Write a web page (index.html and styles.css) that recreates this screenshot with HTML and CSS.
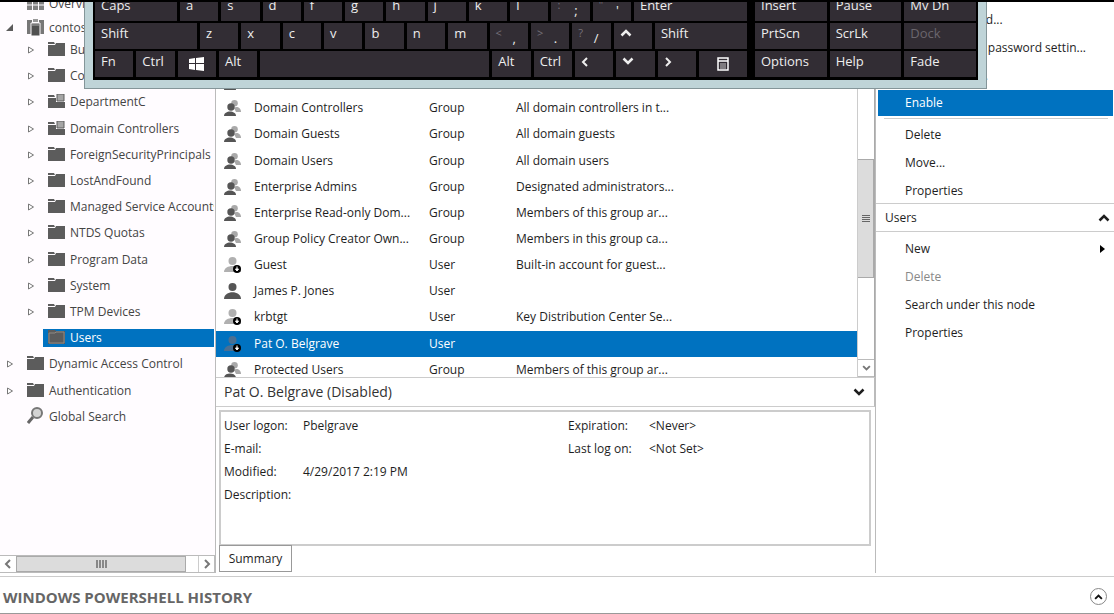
FILE: index.html
```html
<!DOCTYPE html>
<html lang="en">
<head>
    <meta charset="utf-8">
    <title>Active Directory Administrative Center</title>
    <link rel="stylesheet" href="styles.css">
</head>
<body>
    <svg class="defs" aria-hidden="true">
        <symbol id="folder" viewBox="0 0 17 14">
            <path d="M0 0H6L7 2H0Z" fill="currentColor"/>
            <path d="M0 3H7L8 1H17V14H0Z" fill="currentColor"/>
        </symbol>
        <symbol id="folderUnit" viewBox="0 0 17 14">
            <path d="M0 1H6L7 3H0Z" fill="currentColor"/>
            <path d="M0 4H8V8H17V14H0Z" fill="currentColor"/>
            <path d="M9 0H16V7H9Z" fill="#a5a5a5" stroke="#5c5c5c"/>
        </symbol>
        <symbol id="group" viewBox="0 0 17 16">
            <circle cx="10.500" cy="3.300" r="3.300" fill="#a9a9a9"/>
            <path d="M10 8C12 6 17 7 17 12H12Z" fill="#a9a9a9"/>
            <circle cx="7" cy="7" r="3.700" fill="#555"/>
            <path d="M0 16C0 10 12 10 12 16Z" fill="#555"/>
        </symbol>
        <symbol id="user" viewBox="0 0 17 16">
            <circle cx="8.500" cy="4" r="4" fill="currentColor"/>
            <path d="M0 16C0 7 17 7 17 16Z" fill="currentColor"/>
        </symbol>
        <symbol id="userOff" viewBox="0 0 17 16">
            <circle cx="8.500" cy="4" r="4" fill="currentColor"/>
            <path d="M0 15C0 7 17 7 17 15Z" fill="currentColor"/>
            <circle cx="13" cy="12" r="4" fill="#000"/>
            <path d="M13 9.500V12M11.500 12L13 14L14.500 12Z" fill="#fff" stroke="#fff"/>
        </symbol>
        <symbol id="closed" viewBox="0 0 7 8">
            <path d="M1 1L6 4L1 7Z" fill="#fff" stroke="#777"/>
        </symbol>
        <symbol id="down" viewBox="0 0 12 8">
            <path d="M1.500 1.500L6 6L10.500 1.500" fill="none" stroke="currentColor" stroke-width="2.500"/>
        </symbol>
        <symbol id="up" viewBox="0 0 12 8">
            <path d="M1.500 6.500L6 2L10.500 6.500" fill="none" stroke="currentColor" stroke-width="2.500"/>
        </symbol>
        <symbol id="left" viewBox="0 0 8 10">
            <path d="M6 1L2 5L6 9" fill="none" stroke="currentColor" stroke-width="2"/>
        </symbol>
        <symbol id="right" viewBox="0 0 8 10">
            <path d="M2 1L6 5L2 9" fill="none" stroke="currentColor" stroke-width="2"/>
        </symbol>
    </svg>

    <main class="console">
        <nav class="treePane">
            <ul class="tree treeTop">
                <li class="node"><span class="arrow"></span><svg class="icon" viewBox="0 0 17 14"><path d="M0 0H5V14H0ZM6 0H11V14H6ZM12 0H17V14H12Z" fill="#808080"/><path d="M0 9H17" stroke="#fffcff"/></svg><span>Overview</span></li>
                <li class="node"><span class="arrow"><svg width="7" height="7" viewBox="0 0 7 7"><path d="M7 0V7H0Z" fill="#5c5c5c"/></svg></span><svg class="icon domain" viewBox="0 0 17 17"><path d="M0 1H5V15H0ZM12 1H17V15H12Z" fill="#777"/><path d="M6 0H11V3H6Z" fill="#999"/><path d="M4 4H13V17H4Z" fill="#505050" stroke="#fffcff"/><path d="M5 6H12" stroke="#aaa"/></svg><span>contoso (local)</span></li>
            </ul>
            <ul class="tree treeList">
                <li class="node child"><svg class="arrow"><use href="#closed"/></svg><svg class="icon"><use href="#folder"/></svg><span>Builtin</span></li>
                <li class="node child"><svg class="arrow"><use href="#closed"/></svg><svg class="icon"><use href="#folder"/></svg><span>Computers</span></li>
                <li class="node child"><svg class="arrow"><use href="#closed"/></svg><svg class="icon"><use href="#folderUnit"/></svg><span>DepartmentC</span></li>
                <li class="node child"><svg class="arrow"><use href="#closed"/></svg><svg class="icon"><use href="#folderUnit"/></svg><span>Domain Controllers</span></li>
                <li class="node child"><svg class="arrow"><use href="#closed"/></svg><svg class="icon"><use href="#folder"/></svg><span>ForeignSecurityPrincipals</span></li>
                <li class="node child"><svg class="arrow"><use href="#closed"/></svg><svg class="icon"><use href="#folder"/></svg><span>LostAndFound</span></li>
                <li class="node child"><svg class="arrow"><use href="#closed"/></svg><svg class="icon"><use href="#folder"/></svg><span>Managed Service Accounts</span></li>
                <li class="node child"><svg class="arrow"><use href="#closed"/></svg><svg class="icon"><use href="#folder"/></svg><span>NTDS Quotas</span></li>
                <li class="node child"><svg class="arrow"><use href="#closed"/></svg><svg class="icon"><use href="#folder"/></svg><span>Program Data</span></li>
                <li class="node child"><svg class="arrow"><use href="#closed"/></svg><svg class="icon"><use href="#folder"/></svg><span>System</span></li>
                <li class="node child"><svg class="arrow"><use href="#closed"/></svg><svg class="icon"><use href="#folder"/></svg><span>TPM Devices</span></li>
                <li class="node child"><span class="arrow"></span><span class="current"><svg class="icon" viewBox="0 0 17 14"><path d="M0 0H7L8 1H17V14H0Z" fill="#5c5c5c"/><path d="M1 3H7L8 2H16V13H1Z" fill="none" stroke="#8f8a85"/></svg>Users</span></li>
                <li class="node"><svg class="arrow"><use href="#closed"/></svg><svg class="icon"><use href="#folder"/></svg><span>Dynamic Access Control</span></li>
                <li class="node"><svg class="arrow"><use href="#closed"/></svg><svg class="icon"><use href="#folder"/></svg><span>Authentication</span></li>
                <li class="node"><span class="arrow"></span><svg class="icon domain" viewBox="0 0 17 17"><path d="M1 16L6 10" stroke="#666" stroke-width="3"/><circle cx="10" cy="6" r="5" fill="#d4d4d4" stroke="#777" stroke-width="2"/></svg><span>Global Search</span></li>
            </ul>
            <div class="hScroll">
                <button class="scrollButton" aria-label="Scroll left"><svg width="8" height="10"><use href="#left"/></svg></button>
                <div class="hThumb"><i></i><i></i><i></i><i></i></div>
                <button class="scrollButton" aria-label="Scroll right"><svg width="8" height="10"><use href="#right"/></svg></button>
            </div>
        </nav>

        <section class="listPane">
            <div class="listArea">
                <div class="rows">
                    <table class="objects">
                        <tr><td class="kind"><svg><use href="#group"/></svg></td><td class="name">Domain Computers</td><td class="type">Group</td><td>All workstations an...</td></tr>
                        <tr><td class="kind"><svg><use href="#group"/></svg></td><td class="name">Domain Controllers</td><td class="type">Group</td><td>All domain controllers in t...</td></tr>
                        <tr><td class="kind"><svg><use href="#group"/></svg></td><td class="name">Domain Guests</td><td class="type">Group</td><td>All domain guests</td></tr>
                        <tr><td class="kind"><svg><use href="#group"/></svg></td><td class="name">Domain Users</td><td class="type">Group</td><td>All domain users</td></tr>
                        <tr><td class="kind"><svg><use href="#group"/></svg></td><td class="name">Enterprise Admins</td><td class="type">Group</td><td>Designated administrators...</td></tr>
                        <tr><td class="kind"><svg><use href="#group"/></svg></td><td class="name">Enterprise Read-only Dom...</td><td class="type">Group</td><td>Members of this group ar...</td></tr>
                        <tr><td class="kind"><svg><use href="#group"/></svg></td><td class="name">Group Policy Creator Own...</td><td class="type">Group</td><td>Members in this group ca...</td></tr>
                        <tr><td class="kind off"><svg><use href="#userOff"/></svg></td><td class="name">Guest</td><td class="type">User</td><td>Built-in account for guest...</td></tr>
                        <tr><td class="kind"><svg><use href="#user"/></svg></td><td class="name">James P. Jones</td><td class="type">User</td><td></td></tr>
                        <tr><td class="kind off"><svg><use href="#userOff"/></svg></td><td class="name">krbtgt</td><td class="type">User</td><td>Key Distribution Center Se...</td></tr>
                        <tr class="selected"><td class="kind"><svg><use href="#userOff"/></svg></td><td class="name">Pat O. Belgrave</td><td class="type">User</td><td></td></tr>
                        <tr><td class="kind"><svg><use href="#group"/></svg></td><td class="name">Protected Users</td><td class="type">Group</td><td>Members of this group ar...</td></tr>
                    </table>
                </div>
                <div class="vScroll">
                    <div class="vThumb"><i></i><i></i><i></i><i></i></div>
                    <button class="scrollButton" aria-label="Scroll down"><svg width="9" height="6"><use href="#down"/></svg></button>
                </div>
            </div>
            <header class="detailHead">
                <h2>Pat O. Belgrave (Disabled)</h2>
                <button class="plain" aria-label="Collapse details"><svg width="12" height="8"><use href="#down"/></svg></button>
            </header>
            <div class="details">
                <dl class="summary">
                    <dt>User logon:</dt><dd>Pbelgrave</dd><dt>Expiration:</dt><dd>&lt;Never&gt;</dd>
                    <dt>E-mail:</dt><dd></dd><dt>Last log on:</dt><dd>&lt;Not Set&gt;</dd>
                    <dt>Modified:</dt><dd>4/29/2017 2:19 PM</dd><dt></dt><dd></dd>
                    <dt>Description:</dt><dd></dd><dt></dt><dd></dd>
                </dl>
                <button class="tab">Summary</button>
            </div>
        </section>

        <aside class="tasks">
            <div class="taskList">
                <button class="task">Reset password...</button>
                <button class="task">View resultant password settin...</button>
                <button class="task">Add to group...</button>
                <button class="task active">Enable</button>
                <hr>
                <button class="task">Delete</button>
                <button class="task">Move...</button>
                <button class="task">Properties</button>
            </div>
            <header class="taskHead">
                <h2>Users</h2>
                <button class="plain" aria-label="Collapse"><svg width="12" height="8"><use href="#up"/></svg></button>
            </header>
            <div class="taskList nodeTasks">
                <button class="task">New<svg width="5" height="8" viewBox="0 0 5 8"><path d="M0 0L5 4L0 8Z"/></svg></button>
                <button class="task" disabled>Delete</button>
                <button class="task">Search under this node</button>
                <button class="task">Properties</button>
            </div>
        </aside>

        <div class="keyboard">
            <div class="board">
                <div class="keys">
                    <div class="keyRow">
                        <button class="key caps">Caps</button>
                        <button class="key">a</button>
                        <button class="key">s</button>
                        <button class="key">d</button>
                        <button class="key">f</button>
                        <button class="key">g</button>
                        <button class="key">h</button>
                        <button class="key">j</button>
                        <button class="key">k</button>
                        <button class="key">l</button>
                        <button class="key double"><span>:</span><b>;</b></button>
                        <button class="key double"><span>"</span><b>'</b></button>
                        <button class="key enter">Enter</button>
                    </div>
                    <div class="keyRow">
                        <button class="key shiftLeft">Shift</button>
                        <button class="key">z</button>
                        <button class="key">x</button>
                        <button class="key">c</button>
                        <button class="key">v</button>
                        <button class="key">b</button>
                        <button class="key">n</button>
                        <button class="key">m</button>
                        <button class="key double"><span>&lt;</span><b>,</b></button>
                        <button class="key double"><span>&gt;</span><b>.</b></button>
                        <button class="key double"><span>?</span><b>/</b></button>
                        <button class="key" aria-label="Up"><svg width="12" height="8"><use href="#up"/></svg></button>
                        <button class="key shiftRight">Shift</button>
                    </div>
                    <div class="keyRow">
                        <button class="key">Fn</button>
                        <button class="key">Ctrl</button>
                        <button class="key glyph" aria-label="Windows"><svg width="15" height="14" viewBox="0 0 15 14"><path d="M0 2L6 1V6H0ZM7 1L15 0V6H7ZM0 7H6V13L0 12ZM7 7H15V14L7 13Z" fill="#fff"/></svg></button>
                        <button class="key">Alt</button>
                        <button class="key space" aria-label="Space"></button>
                        <button class="key">Alt</button>
                        <button class="key">Ctrl</button>
                        <button class="key" aria-label="Left"><svg width="8" height="10"><use href="#left"/></svg></button>
                        <button class="key" aria-label="Down"><svg width="12" height="8"><use href="#down"/></svg></button>
                        <button class="key" aria-label="Right"><svg width="8" height="10"><use href="#right"/></svg></button>
                        <button class="key glyph menu" aria-label="Menu"><svg width="12" height="14" viewBox="0 0 12 14"><path d="M1 1H11V13H1ZM1 4H11" fill="none" stroke="#fff" stroke-width="1.500"/><path d="M3 7H9M3 9H9M3 11H9" stroke="#ccc"/></svg></button>
                    </div>
                </div>
                <div class="sideKeys">
                    <button class="key">Insert</button>
                    <button class="key">Pause</button>
                    <button class="key">Mv Dn</button>
                    <button class="key">PrtScn</button>
                    <button class="key">ScrLk</button>
                    <button class="key" disabled>Dock</button>
                    <button class="key">Options</button>
                    <button class="key">Help</button>
                    <button class="key">Fade</button>
                </div>
            </div>
        </div>
    </main>

    <footer class="history">
        <h1>WINDOWS POWERSHELL HISTORY</h1>
        <button class="round" aria-label="Expand history"><svg width="9" height="6"><use href="#up"/></svg></button>
    </footer>
</body>
</html>
```
FILE: styles.css
```css
* {
    box-sizing: border-box;
}

body {
    display: flex;
    flex-direction: column;
    height: 100vh;
    margin: 0;
    border-top: 2px solid #000;
    border-bottom: 1px solid #999;
    background-color: #fff;
    color: #1e1e1e;
    font-family: "Open Sans", "Noto Sans", sans-serif;
    font-size: 12px;
    line-height: 18px;
    white-space: nowrap;
    overflow: hidden;
}

button {
    padding: 0;
    border: none;
    background: none;
    color: inherit;
    font: inherit;
}

svg {
    display: block;
    flex: none;
}

h1, h2, ul, dl, dd {
    margin: 0;
    padding: 0;
}

.defs {
    position: absolute;
    width: 0;
    height: 0;
}

.console {
    position: relative;
    display: grid;
    grid-template-columns: 216px 1fr 239px;
    flex: 1;
    min-height: 0;
    padding-bottom: 3px;
    border-bottom: 1px solid #ccc;
    overflow: hidden;
}

/* navigation tree */
.treePane {
    display: flex;
    flex-direction: column;
    min-height: 0;
    border-right: 1px solid #bbb;
    background-color: #fffcff;
    color: #444;
    overflow: hidden;
}

.tree {
    display: grid;
    list-style: none;
}

.treeTop {
    grid-auto-rows: 24px;
    margin-top: -10px;
}

.treeList {
    grid-auto-rows: 1fr;
    height: 393px;
    margin-top: -3px;
}

.node {
    display: flex;
    align-items: center;
    padding-left: 6px;
    margin-right: 1px;
    overflow: hidden;
}

.child {
    padding-left: 27px;
}

.arrow {
    width: 8px;
    height: 8px;
    margin-right: 13px;
}

.icon {
    width: 17px;
    height: 14px;
    margin-right: 5px;
    margin-bottom: 2px;
    color: #5c5c5c;
}

.domain {
    height: 17px;
}

.current {
    display: flex;
    align-items: center;
    flex: 1;
    margin-left: -5px;
    padding-left: 5px;
    background-color: #0072c0;
    color: #fff;
}

.hScroll {
    display: flex;
    height: 18px;
    margin-top: auto;
    border: 1px solid #bbb;
    border-left: none;
    background-color: #fff;
}

.scrollButton {
    display: flex;
    align-items: center;
    justify-content: center;
    width: 16px;
    height: 16px;
    color: #777;
}

.hThumb, .vThumb {
    display: flex;
    align-items: center;
    justify-content: center;
    gap: 1px;
    border: 1px solid #aaa;
    background-color: #dcdcdc;
}

.hThumb {
    width: 170px;
    margin-right: auto;
}

.hThumb i {
    width: 2px;
    height: 8px;
    background-color: #888;
}

.hThumb + .scrollButton {
    border-left: 1px solid #ccc;
}

/* object list */
.listPane {
    display: flex;
    flex-direction: column;
    min-width: 0;
    min-height: 0;
}

.listArea {
    display: flex;
    flex: 1;
    min-height: 0;
    border-right: 1px solid #aaa;
}

.rows {
    flex: 1;
    min-width: 0;
    overflow: hidden;
}

.objects {
    width: 100%;
    height: 314px;
    margin-top: 67px;
    border-collapse: collapse;
    table-layout: fixed;
}

.objects td {
    padding: 0;
}

.kind {
    width: 38px;
    color: #555;
}

.kind svg {
    width: 17px;
    height: 16px;
    margin-left: 8px;
}

.off {
    color: #b0b0b0;
}

.name {
    width: 175px;
}

.type {
    width: 87px;
}

.selected {
    background-color: #0072c0;
    color: #fff;
}

.selected .kind {
    color: #4a6f92;
}

.vScroll {
    display: flex;
    flex-direction: column;
    width: 17px;
    border-left: 1px solid #ccc;
}

.vThumb {
    flex-direction: column;
    height: 119px;
    margin-top: 157px;
    border-left: none;
}

.vThumb i {
    width: 8px;
    height: 1px;
    background-color: #666;
}

.vScroll .scrollButton {
    height: 18px;
    margin-top: auto;
    border-top: 1px solid #bbb;
    border-bottom: 1px solid #bbb;
}

/* preview of the selected object */
.detailHead {
    display: flex;
    align-items: center;
    justify-content: space-between;
    height: 30px;
    padding: 0 9px 0 8px;
    border-top: 1px solid #ccc;
    border-right: 1px solid #bbb;
    border-bottom: 1px solid #ccc;
}

h2 {
    font-size: 12px;
    font-weight: normal;
}

.detailHead h2 {
    color: #333;
    font-size: 14px;
}

.details {
    padding: 3px 4px 1px 3px;
}

.summary {
    display: grid;
    grid-template-columns: 79px 265px 81px 1fr;
    grid-auto-rows: 23px;
    align-items: center;
    height: 136px;
    padding: 2px 3px;
    border: 2px solid #ccc;
}

.tab {
    display: block;
    width: 73px;
    height: 27px;
    margin-top: -1px;
    border: 1px solid #999;
    background-color: #fff;
}

/* task pane */
.tasks {
    min-width: 0;
    border-left: 1px solid #bbb;
}

.taskList {
    display: flex;
    flex-direction: column;
    padding: 4px 1px 0 2px;
}

.task {
    display: flex;
    align-items: center;
    justify-content: space-between;
    height: 28px;
    padding: 0 8px 0 27px;
}

.task:disabled {
    color: #888;
}

.active {
    height: 26px;
    background-color: #0072c0;
    color: #fff;
}

.taskList hr {
    width: 224px;
    margin: 2px auto;
    border: none;
    border-top: 1px solid #ccc;
}

.taskHead {
    display: flex;
    align-items: center;
    justify-content: space-between;
    height: 29px;
    margin-top: -2px;
    padding: 0 4px 0 9px;
    border-top: 1px solid #ccc;
    border-bottom: 1px solid #ccc;
}

.nodeTasks {
    padding-top: 3px;
}

/* on-screen keyboard floating over the console */
.keyboard {
    position: absolute;
    top: 0;
    left: 84px;
    width: 903px;
    height: 87px;
    padding: 0 8px;
    border: 1px solid #849599;
    border-top: none;
    background-color: #bfd4d8;
    overflow: hidden;
}

.board {
    display: flex;
    gap: 8px;
    height: 78px;
    padding: 0 2px;
    background-color: #000;
}

.keys {
    display: grid;
    grid-template-rows: 26px 26px 26px;
    gap: 2px;
    flex: 1;
    margin-top: -7px;
}

.keyRow {
    display: flex;
    gap: 3px;
}

.sideKeys {
    display: grid;
    grid-template-columns: 1fr 1fr 1fr;
    grid-template-rows: 26px 26px 26px;
    gap: 2px 3px;
    width: 221px;
    margin-top: -7px;
}

.key {
    display: flex;
    flex: 1 0 0;
    align-items: flex-start;
    min-width: 0;
    padding: 1px 6px;
    background-color: #322d34;
    color: #eee;
    font-size: 13px;
}

.key:disabled {
    color: #6b666d;
}

.key svg {
    margin: 5px 0;
}

.glyph {
    justify-content: center;
}

.double {
    justify-content: space-between;
}

.double span {
    color: #77727a;
    font-size: 11px;
}

.double b {
    margin-right: 6px;
    padding-top: 5px;
    font-weight: normal;
}

.caps {
    flex: 0 0 82px;
}

.enter {
    flex: 0 0 113px;
}

.shiftLeft {
    flex: 0 0 102px;
}

.shiftRight {
    flex: 0 0 92px;
}

.space {
    flex: 0 0 229px;
}

.menu {
    flex: 0 0 48px;
}

.history {
    display: flex;
    align-items: center;
    justify-content: space-between;
    height: 36px;
    padding: 3px 7px 0 3px;
}

.history h1 {
    color: #666;
    font-size: 15px;
}

.round {
    display: flex;
    align-items: center;
    justify-content: center;
    width: 17px;
    height: 17px;
    border: 1px solid #888;
    border-radius: 50%;
    color: #111;
}
```
